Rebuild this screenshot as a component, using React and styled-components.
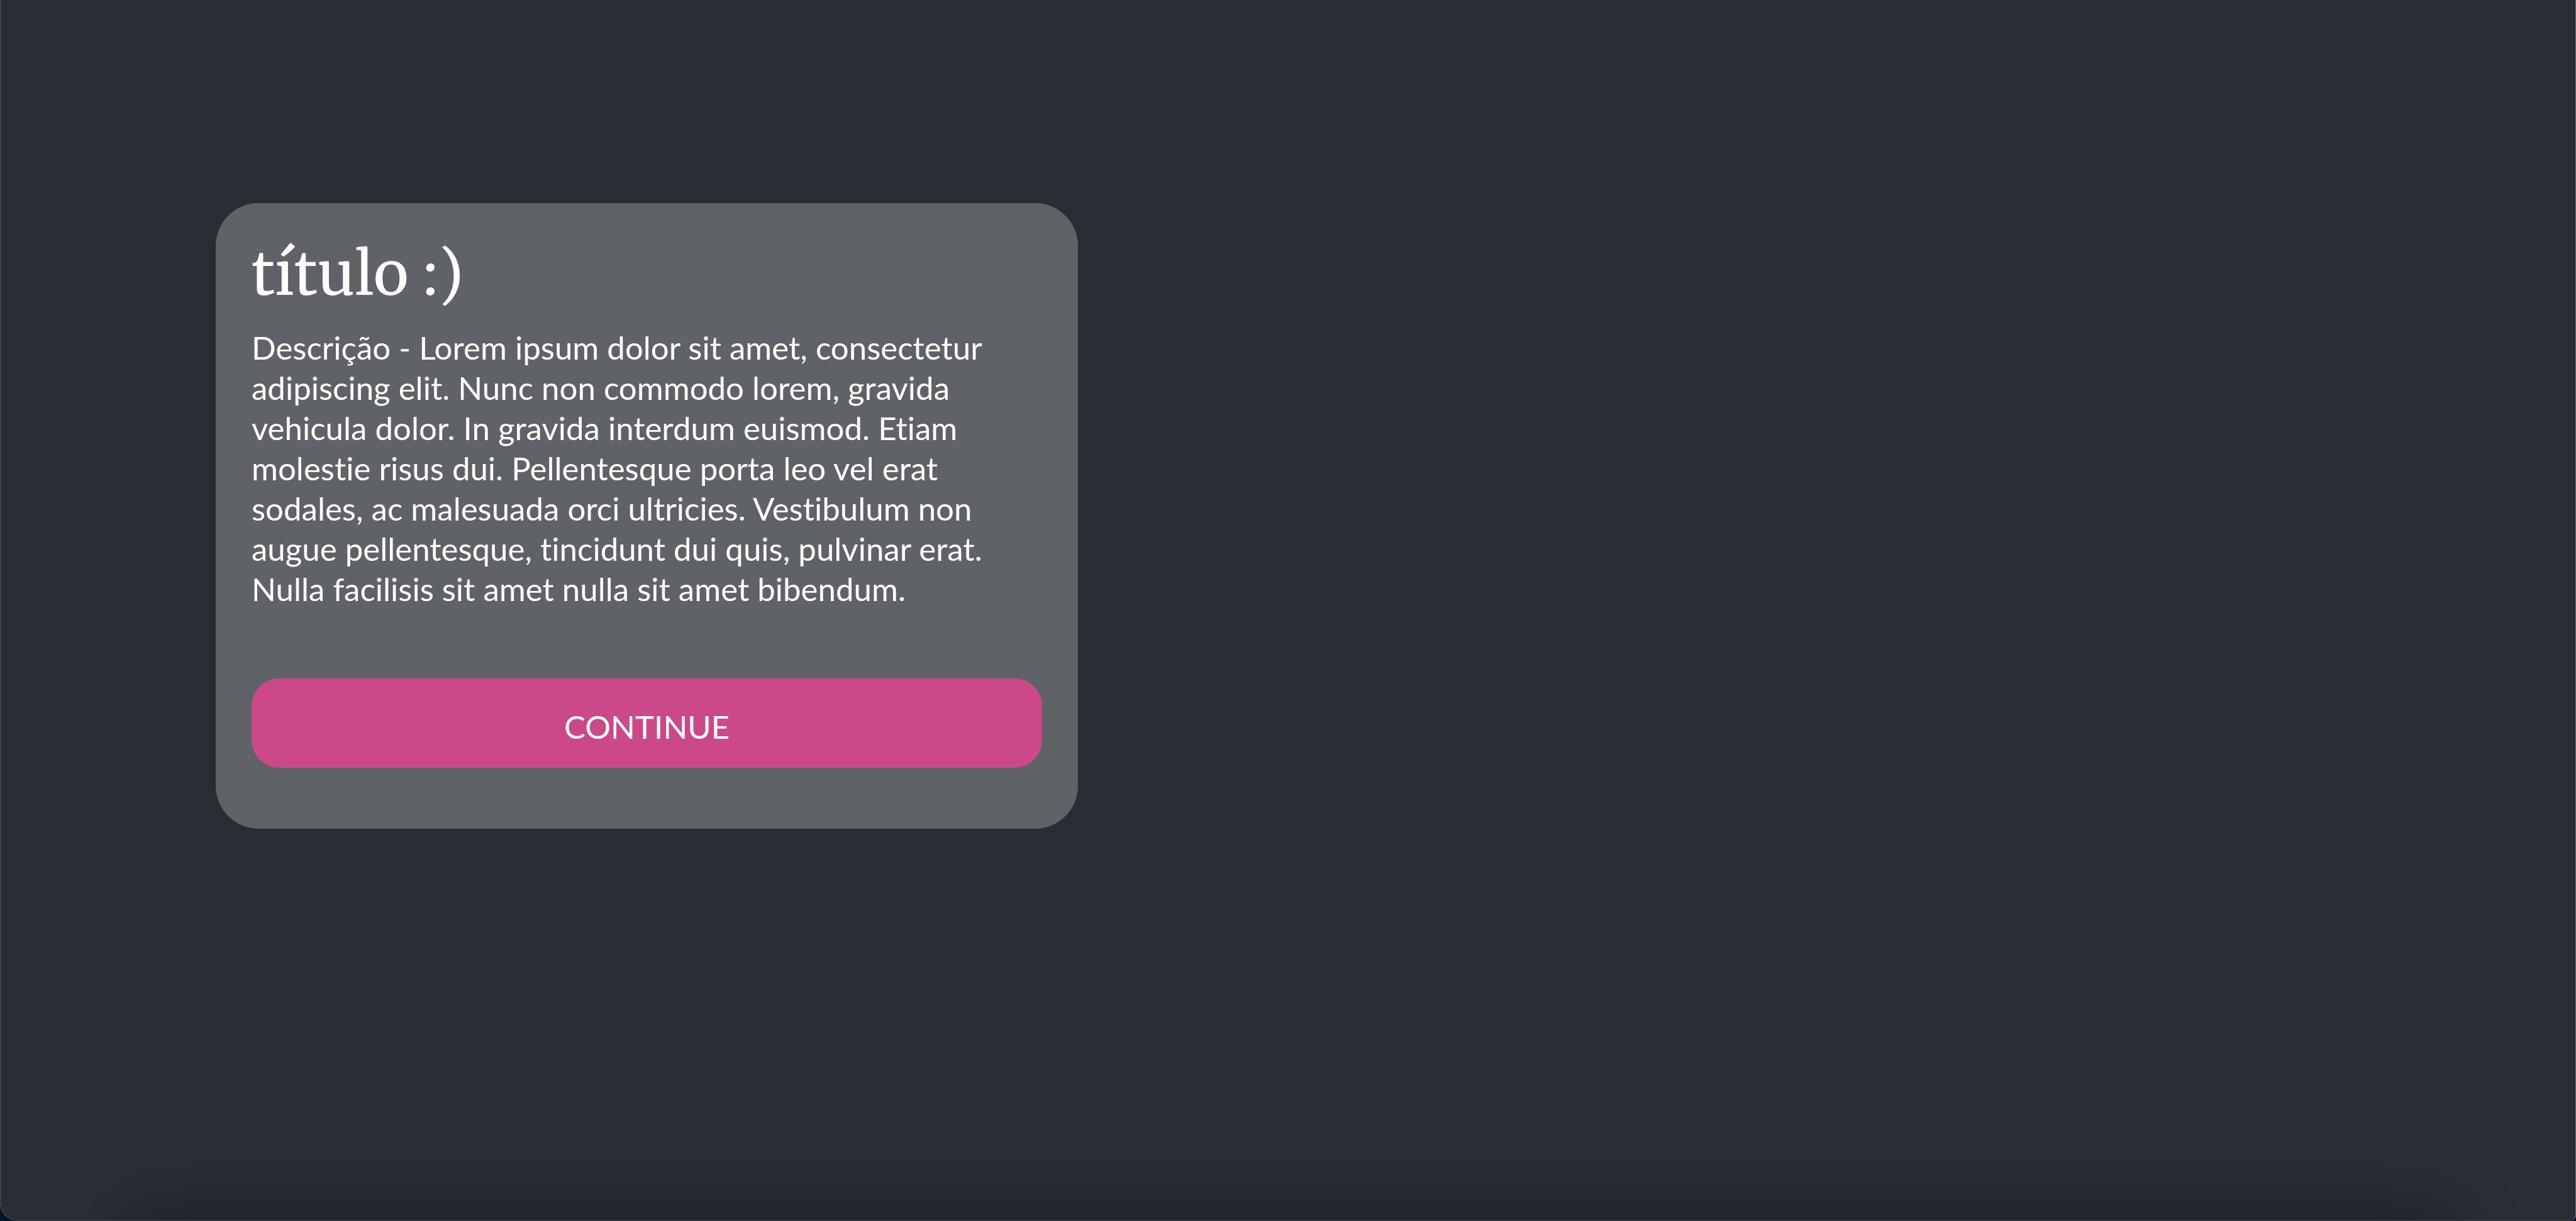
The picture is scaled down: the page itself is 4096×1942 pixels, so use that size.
import React from "react";
import styled, { createGlobalStyle } from "styled-components";

const GlobalStyle = createGlobalStyle`
  body {
    margin: 0;
    background: #04142a;
  }
`;

const Page = styled.main`
  position: relative;
  box-sizing: border-box;
  min-height: 100vh;
  padding: 323px 341px;
  overflow: hidden;
  border: solid #3f444a;
  border-width: 0 1px 1px 2px;
  border-right-color: #74787c;
  border-radius: 0 0 10px 28px;
  background: #292d34;

  /* soft shade rising from below the lower edge */
  &::after {
    content: "";
    position: absolute;
    top: 100%;
    left: 200px;
    right: 200px;
    height: 120px;
    box-shadow: 0 0 120px rgba(0, 0, 0, 0.32);
    pointer-events: none;
  }
`;

const Card = styled.section`
  box-sizing: border-box;
  width: 40.2%;
  padding: 56px 57px 97px;
  border-radius: 68px;
  background: #5f6267;
  color: #fff;
`;

const Title = styled.h1`
  margin: 0;
  font: 400 95px/114px Merriweather, "Noto Serif", "DejaVu Serif", serif;
  font-kerning: none;
`;

const Description = styled.p`
  margin: 28px 0 110px;
  font: 400 51px/64px Lato, sans-serif;
  font-variant-ligatures: none;
`;

const Button = styled.button`
  display: block;
  width: 100%;
  height: 142px;
  padding: 12px 0 0;
  border: 0;
  border-radius: 44px;
  background: #cb4988;
  color: #fff;
  font: 400 51px/64px Lato, sans-serif;
  cursor: pointer;
`;

export default function App() {
  return (
    <Page>
      <GlobalStyle />
      <Card>
        <Title>título :)</Title>
        <Description>
          Descrição - Lorem ipsum dolor sit amet, consectetur adipiscing elit.
          Nunc non commodo lorem, gravida vehicula dolor. In gravida interdum
          euismod. Etiam molestie risus dui. Pellentesque porta leo vel erat
          sodales, ac malesuada orci ultricies. Vestibulum non augue
          pellentesque, tincidunt dui quis, pulvinar erat. Nulla facilisis sit
          amet nulla sit amet bibendum.
        </Description>
        <Button type="button">CONTINUE</Button>
      </Card>
    </Page>
  );
}
